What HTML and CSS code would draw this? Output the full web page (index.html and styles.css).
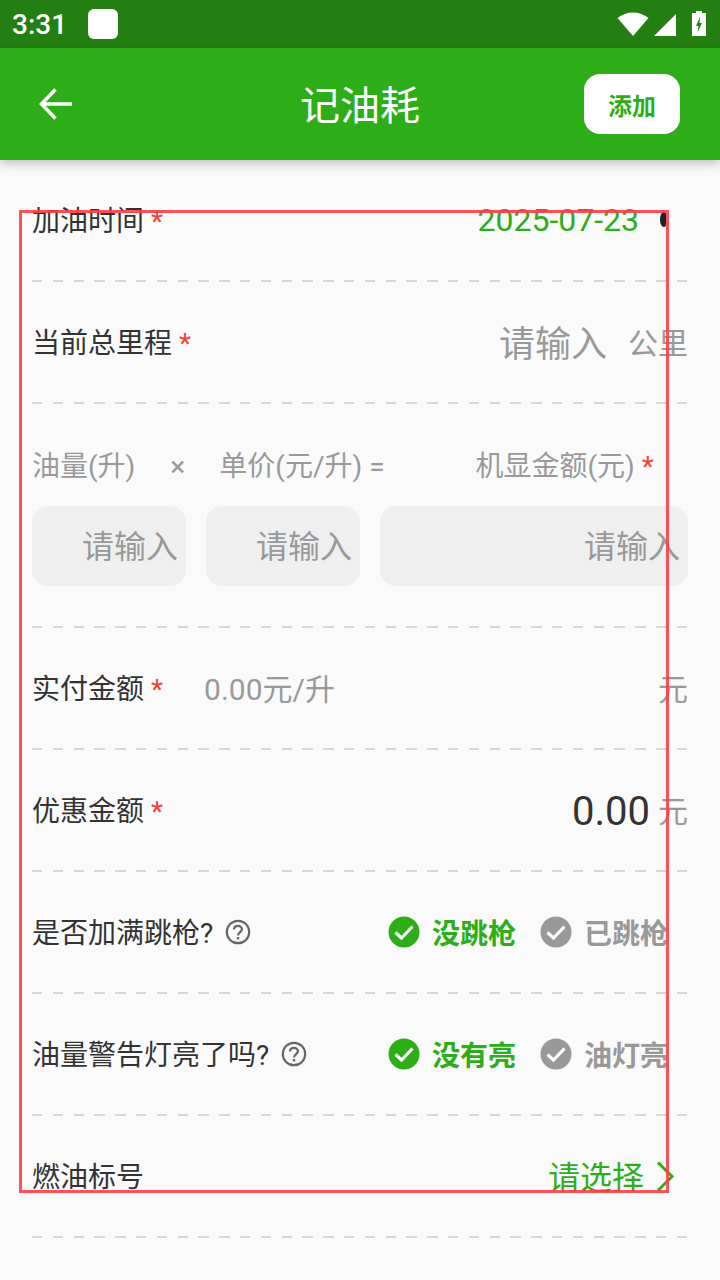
FILE: index.html
```html
<!DOCTYPE html>
<html lang="zh">
<head>
  <meta charset="UTF-8">
  <meta name="viewport" content="width=device-width, initial-scale=1.0">
  <title>记油耗</title>
  <link rel="stylesheet" href="styles.css">
</head>
<body>
  <div class="statusbar">
    <span class="clock">3:31</span>
    <span class="status-app"></span>
    <div class="status-icons">
      <svg class="wifi" width="32" height="24" viewBox="0 0 32 24"><path d="M0.500 6C9-1.500 23-1.500 31.500 6L16 24Z" fill="#fff"/></svg>
      <svg class="signal" width="22" height="22" viewBox="0 0 22 22"><path d="M0 22L22 0V22Z" fill="#fff"/></svg>
      <svg class="battery" width="14" height="25" viewBox="0 0 14 25"><path fill-rule="evenodd" d="M4 0H10V2H14V25H0V2H4ZM8 6L4 15H6.500L5.500 21.500L10 12H7.500Z" fill="#fff"/></svg>
    </div>
  </div>

  <div class="appbar">
    <svg class="back" width="34" height="32" viewBox="0 0 34 32"><path d="M33 16H3M16.500 1.500L2.500 16L16.500 30.500" fill="none" stroke="#fff" stroke-width="3.500"/></svg>
    <div class="title">记油耗</div>
    <div class="add">添加</div>
  </div>

  <div class="form">
    <div class="row">
      <div class="label">加油时间 <span class="req">*</span></div>
      <div class="value date">2025-07-23</div>
      <span class="date-arrow"></span>
    </div>

    <div class="row">
      <div class="label">当前总里程 <span class="req">*</span></div>
      <div class="value big-hint">请输入</div>
      <div class="unit unit-km">公里</div>
    </div>

    <div class="row row-calc">
      <div class="calc-labels">
        <span>油量(升)</span>
        <span class="times">×</span>
        <span class="price">单价(元/升) =</span>
        <span class="total">机显金额(元) <span class="req">*</span></span>
      </div>
      <div class="calc-inputs">
        <div class="box">请输入</div>
        <div class="box">请输入</div>
        <div class="box box-wide">请输入</div>
      </div>
    </div>

    <div class="row">
      <div class="label">实付金额 <span class="req">*</span></div>
      <div class="per-litre">0.00元/升</div>
      <div class="unit">元</div>
    </div>

    <div class="row">
      <div class="label">优惠金额 <span class="req">*</span></div>
      <div class="value amount">0.00</div>
      <div class="unit">元</div>
    </div>

    <div class="row">
      <div class="label">是否加满跳枪?</div>
      <svg class="help" width="26" height="26" viewBox="0 0 26 26"><circle cx="13" cy="13" r="11.200" fill="none" stroke="#666" stroke-width="2.200"/><path d="M9 10.500C9 5.800 17 5.800 17 10.300C17 13 13 13.300 13 16.500" fill="none" stroke="#666" stroke-width="2.200"/><rect x="11.800" y="18" width="2.400" height="2.400" fill="#666"/></svg>
      <div class="choices">
        <div class="choice on">
          <svg width="32" height="32" viewBox="0 0 32 32"><circle cx="16" cy="16" r="15.500" fill="#2dae18"/><path d="M7.500 16.500L13.500 22L24.500 10.500" fill="none" stroke="#fff" stroke-width="3.200"/></svg>
          <span>没跳枪</span>
        </div>
        <div class="choice">
          <svg width="32" height="32" viewBox="0 0 32 32"><circle cx="16" cy="16" r="15.500" fill="#999"/><path d="M7.500 16.500L13.500 22L24.500 10.500" fill="none" stroke="#fff" stroke-width="3.200"/></svg>
          <span>已跳枪</span>
        </div>
      </div>
    </div>

    <div class="row">
      <div class="label">油量警告灯亮了吗?</div>
      <svg class="help" width="26" height="26" viewBox="0 0 26 26"><circle cx="13" cy="13" r="11.200" fill="none" stroke="#666" stroke-width="2.200"/><path d="M9 10.500C9 5.800 17 5.800 17 10.300C17 13 13 13.300 13 16.500" fill="none" stroke="#666" stroke-width="2.200"/><rect x="11.800" y="18" width="2.400" height="2.400" fill="#666"/></svg>
      <div class="choices">
        <div class="choice on">
          <svg width="32" height="32" viewBox="0 0 32 32"><circle cx="16" cy="16" r="15.500" fill="#2dae18"/><path d="M7.500 16.500L13.500 22L24.500 10.500" fill="none" stroke="#fff" stroke-width="3.200"/></svg>
          <span>没有亮</span>
        </div>
        <div class="choice">
          <svg width="32" height="32" viewBox="0 0 32 32"><circle cx="16" cy="16" r="15.500" fill="#999"/><path d="M7.500 16.500L13.500 22L24.500 10.500" fill="none" stroke="#fff" stroke-width="3.200"/></svg>
          <span>油灯亮</span>
        </div>
      </div>
    </div>

    <div class="row">
      <div class="label">燃油标号</div>
      <div class="value select">请选择</div>
      <svg class="chevron" width="20" height="32" viewBox="0 0 20 32"><path d="M2 1.500L16 15.500L2 29.500" fill="none" stroke="#2dae18" stroke-width="3"/></svg>
    </div>
  </div>

  <div class="frame"></div>
</body>
</html>
```

FILE: styles.css
```css
* {
  box-sizing: border-box;
  margin: 0;
  padding: 0;
}

html, body {
  height: 1280px;
  overflow: hidden;
}

body {
  position: relative;
  font-family: Roboto, "Noto Sans CJK SC", sans-serif;
  font-size: 28px;
  color: #333;
  background-color: #fafafa;
}

.statusbar {
  display: flex;
  align-items: center;
  height: 48px;
  padding: 0 14px 0 12px;
  background-color: #237f12;
  color: #fff;
}

.clock {
  font-size: 28px;
  font-weight: 500;
}

.status-app {
  width: 30px;
  height: 30px;
  margin-left: 21px;
  border-radius: 6px;
  background-color: #fff;
}

.status-icons {
  display: flex;
  align-items: flex-end;
  margin-left: auto;
  height: 25px;
  margin-bottom: 1px;
}

.signal {
  margin-left: 5px;
}

.battery {
  margin-left: 16px;
}

.appbar {
  position: relative;
  z-index: 1;
  display: flex;
  align-items: center;
  height: 112px;
  padding: 0 40px 0 39px;
  background-color: #2dae18;
  box-shadow: 0 4px 10px rgba(0, 0, 0, 0.22);
}

.title {
  position: absolute;
  left: 0;
  right: 0;
  padding-bottom: 2px;
  text-align: center;
  color: #fff;
  font-size: 40px;
}

.add {
  position: relative;
  display: flex;
  align-items: center;
  justify-content: center;
  width: 96px;
  height: 60px;
  margin-left: auto;
  border-radius: 16px;
  background-color: #fff;
  color: #2dae18;
  font-size: 24px;
  font-weight: 700;
}

.form {
  padding: 0 32px;
}

.row {
  display: flex;
  align-items: center;
  height: 122px;
  padding-bottom: 4px;
  background-image: repeating-linear-gradient(90deg, #d6d6d6 0, #d6d6d6 10.400px, transparent 10.400px, transparent 20.800px);
  background-repeat: no-repeat;
  background-position: left bottom;
  background-size: 100% 2px;
}

.label {
  white-space: pre;
}

.req {
  color: #f44336;
}

.value {
  margin-left: auto;
}

.date {
  margin-top: 2px;
  color: #2dae18;
  font-size: 32px;
  margin-right: 21px;
}

.date-arrow {
  width: 6px;
  height: 15px;
  margin-right: 22px;
  border-radius: 4px 2px 2px 4px / 7px 3px 3px 7px;
  background-color: #222;
}

.big-hint {
  color: #999;
  font-size: 36px;
}

.unit {
  color: #999;
  font-size: 30px;
  margin-left: auto;
}

.amount + .unit {
  margin-left: 8px;
}

.unit-km {
  margin-left: 21px;
}

.row-calc {
  display: block;
  height: 224px;
  padding-top: 47px;
}

.calc-labels {
  display: flex;
  color: #999;
  height: 32px;
  line-height: 32px;
  white-space: pre;
}

.times {
  margin-left: 35px;
}

.price {
  margin-left: 34px;
}

.total {
  margin-left: 91px;
}

.calc-inputs {
  display: flex;
  gap: 20px;
  margin-top: 23px;
}

.box {
  width: 154px;
  height: 80px;
  padding-right: 8px;
  border-radius: 16px;
  background-color: #efefef;
  color: #999;
  font-size: 32px;
  line-height: 82px;
  text-align: right;
}

.box-wide {
  width: 308px;
}

.per-litre {
  margin-left: 41px;
  font-size: 30px;
  color: #999;
}

.amount {
  margin-top: 5px;
  font-size: 40px;
}

.help {
  margin-left: 12px;
  margin-top: 2px;
}

.choices {
  display: flex;
  gap: 24px;
  margin-top: 2px;
  margin-left: auto;
  margin-right: 20px;
}

.choice {
  display: flex;
  align-items: center;
  gap: 12px;
  color: #999;
  font-weight: 700;
}

.choice.on {
  color: #2dae18;
}

.select {
  color: #2dae18;
  font-size: 32px;
}

.chevron {
  margin: 4px 12px 0 12px;
}

/* outline drawn over the form */
.frame {
  position: absolute;
  left: 19px;
  top: 210px;
  width: 650px;
  height: 983px;
  border: 3px solid rgba(255, 60, 70, 0.9);
  pointer-events: none;
}
```
